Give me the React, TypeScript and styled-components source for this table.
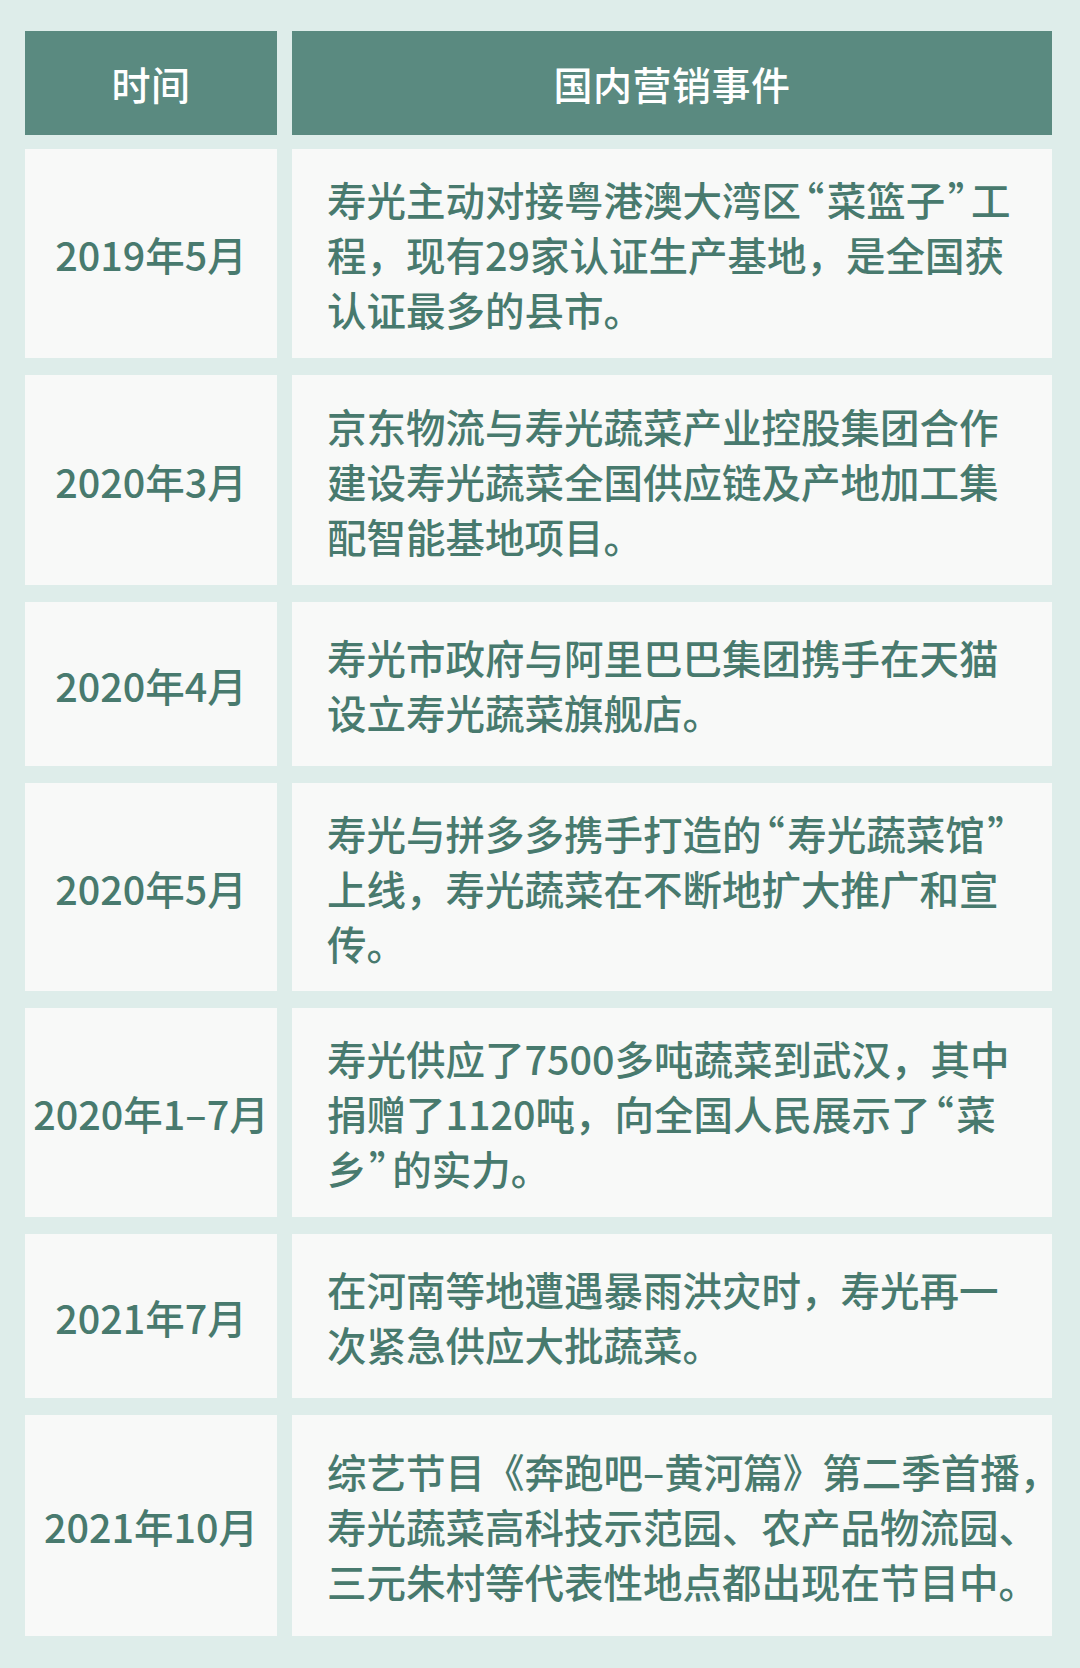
import styled, { createGlobalStyle } from 'styled-components';

type Event = {
    date: string;
    lines: string[];
    height: number;
};

const events: Event[] = [
    {
        date: '2019年5月',
        lines: ['寿光主动对接粤港澳大湾区“菜篮子”工', '程，现有29家认证生产基地，是全国获', '认证最多的县市。'],
        height: 209,
    },
    {
        date: '2020年3月',
        lines: ['京东物流与寿光蔬菜产业控股集团合作', '建设寿光蔬菜全国供应链及产地加工集', '配智能基地项目。'],
        height: 210,
    },
    {
        date: '2020年4月',
        lines: ['寿光市政府与阿里巴巴集团携手在天猫', '设立寿光蔬菜旗舰店。'],
        height: 164,
    },
    {
        date: '2020年5月',
        lines: ['寿光与拼多多携手打造的“寿光蔬菜馆”', '上线，寿光蔬菜在不断地扩大推广和宣', '传。'],
        height: 208,
    },
    {
        date: '2020年1–7月',
        lines: ['寿光供应了7500多吨蔬菜到武汉，其中', '捐赠了1120吨，向全国人民展示了“菜', '乡”的实力。'],
        height: 209,
    },
    {
        date: '2021年7月',
        lines: ['在河南等地遭遇暴雨洪灾时，寿光再一', '次紧急供应大批蔬菜。'],
        height: 164,
    },
    {
        date: '2021年10月',
        lines: ['综艺节目《奔跑吧–黄河篇》第二季首播，', '寿光蔬菜高科技示范园、农产品物流园、', '三元朱村等代表性地点都出现在节目中。'],
        height: 221,
    },
];

const GlobalStyle = createGlobalStyle`
    html, body {
        margin: 0;
        padding: 0;
        background: #deedea;
    }

    body {
        font-family: "Noto Sans CJK SC", "Noto Sans", sans-serif;
    }
`;

const Page = styled.div`
    width: 1080px;
    min-height: 1668px;
    box-sizing: border-box;
    padding: 31px 28px 0 25px;
    background: #deedea;
`;

const Table = styled.div`
    display: flex;
    flex-direction: column;
    gap: 17px;
`;

const Row = styled.div<{ $h: number }>`
    display: grid;
    grid-template-columns: 252px 760px;
    column-gap: 15px;
    height: ${(p) => p.$h}px;
`;

const HeadRow = styled(Row)`
    margin-bottom: -3px;
`;

const HeadCell = styled.div`
    display: flex;
    align-items: center;
    justify-content: center;
    background: #5a8a80;
    color: #ffffff;
    font-size: 39px;
    font-weight: 500;
    letter-spacing: 0.5px;
`;

const DateCell = styled.div`
    display: flex;
    align-items: center;
    justify-content: center;
    background: #f8f9f8;
    color: #487a6e;
    font-size: 39.5px;
    font-weight: 500;
    white-space: nowrap;
`;

const TextCell = styled.div`
    display: flex;
    flex-direction: column;
    justify-content: center;
    padding-left: 35px;
    background: #f8f9f8;
    color: #487a6e;
    font-size: 39.5px;
    font-weight: 500;
    line-height: 55px;
`;

const Line = styled.div`
    white-space: nowrap;
`;

// the source sets curly quotes proportionally, not full-width
const Quote = styled.span`
    font-feature-settings: "palt";
    padding: 0 3px;
`;

const renderLine = (line: string) =>
    line.split(/([“”])/).map((part, i) =>
        part === '“' || part === '”' ? <Quote key={i}>{part}</Quote> : part,
    );

export default function App() {
    return (
        <Page lang="zh-CN">
            <GlobalStyle />
            <Table>
                <HeadRow $h={104}>
                    <HeadCell>时间</HeadCell>
                    <HeadCell>国内营销事件</HeadCell>
                </HeadRow>
                {events.map((ev) => (
                    <Row key={ev.date} $h={ev.height}>
                        <DateCell>{ev.date}</DateCell>
                        <TextCell>
                            {ev.lines.map((line) => (
                                <Line key={line}>{renderLine(line)}</Line>
                            ))}
                        </TextCell>
                    </Row>
                ))}
            </Table>
        </Page>
    );
}
